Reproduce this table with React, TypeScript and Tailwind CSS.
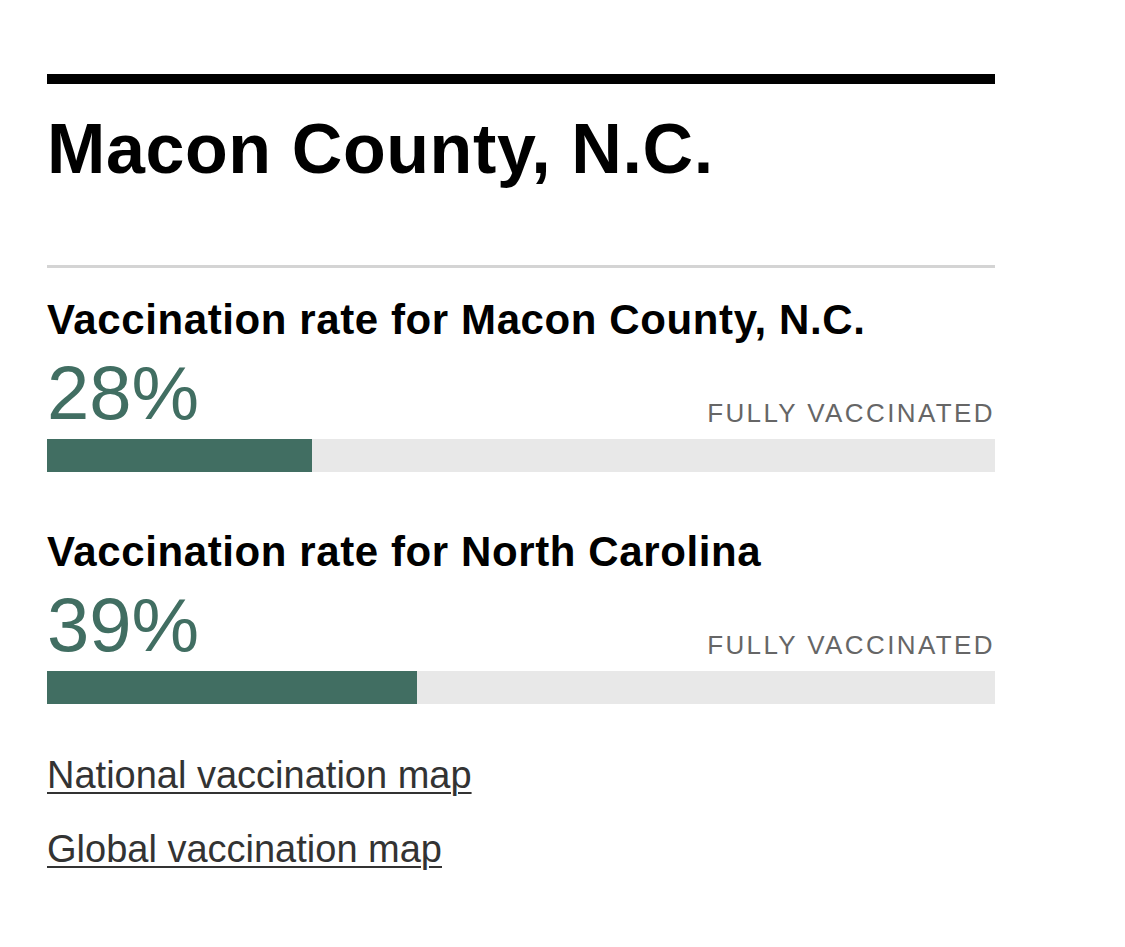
const stats = [
  { label: "Vaccination rate for Macon County, N.C.", pct: 28 },
  { label: "Vaccination rate for North Carolina", pct: 39 },
];

function StatBlock({ label, pct, first }: { label: string; pct: number; first?: boolean }) {
  return (
    <div className={first ? "mt-[31px]" : "mt-[59px]"}>
      <h3 className="text-[42px] leading-none font-bold tracking-[0.6px] text-black">{label}</h3>
      <div className="mt-[14px] flex items-end justify-between">
        <span className="text-[76px] leading-none text-[#416e62]">{pct}%</span>
        <span className="mb-[5px] text-[26px] leading-none tracking-[2.4px] text-[#666]">
          FULLY VACCINATED
        </span>
      </div>
      <div className="mt-[8px] h-[33px] w-full bg-[#e8e8e8]">
        <div className="h-full bg-[#416e62]" style={{ width: `${pct}%` }} />
      </div>
    </div>
  );
}

export default function App() {
  return (
    <main
      className="min-h-screen bg-white pl-[47px] pt-[74px]"
      style={{ fontFamily: '"Liberation Sans", Arial, sans-serif' }}
    >
      <div className="w-[948px]">
        <div className="h-[10px] bg-black" />
        <h1 className="mt-[30px] text-[70px] leading-none font-bold tracking-[0.6px] text-black">
          Macon County, N.C.
        </h1>
        <div className="mt-[81px] h-[3px] bg-[#d4d4d4]" />
        {stats.map((s, i) => (
          <StatBlock key={s.label} label={s.label} pct={s.pct} first={i === 0} />
        ))}
        <div className="mt-[52px] flex flex-col items-start gap-[36px]">
          <a
            href="#"
            className="text-[38px] leading-none text-[#333] underline decoration-[2px] underline-offset-[4px]"
          >
            National vaccination map
          </a>
          <a
            href="#"
            className="text-[38px] leading-none text-[#333] underline decoration-[2px] underline-offset-[4px]"
          >
            Global vaccination map
          </a>
        </div>
      </div>
    </main>
  );
}
